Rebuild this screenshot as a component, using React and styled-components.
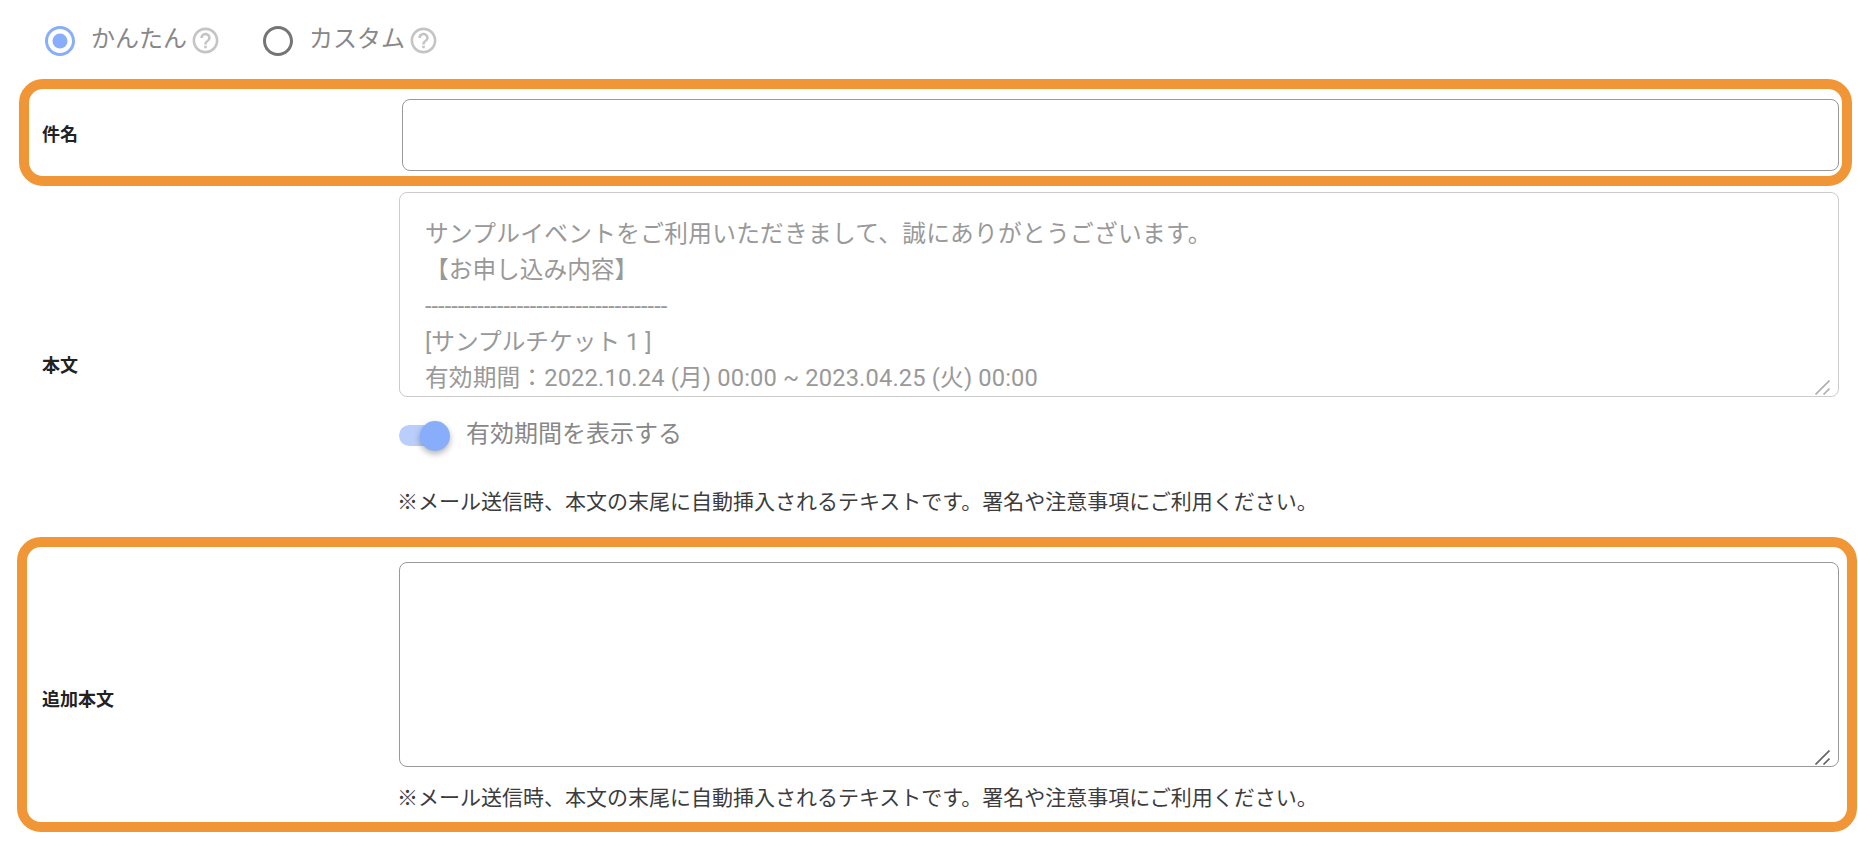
import styled, { createGlobalStyle } from 'styled-components';

const FONT = `Roboto, "Noto Sans CJK JP", sans-serif`;

const HELP_PATH =
  'M11 18h2v-2h-2v2zm1-16C6.48 2 2 6.48 2 12s4.48 10 10 10 10-4.48 10-10S17.52 2 12 2zm0 18c-4.41 0-8-3.59-8-8s3.59-8 8-8 8 3.59 8 8-3.59 8-8 8zm0-14c-2.21 0-4 1.79-4 4h2c0-1.1.9-2 2-2s2 .9 2 2c0 2-3 1.75-3 5h2c0-2.25 3-2.5 3-5 0-2.21-1.79-4-4-4z';
const RING_PATH =
  'M12 2C6.48 2 2 6.48 2 12s4.48 10 10 10 10-4.48 10-10S17.52 2 12 2zm0 18c-4.42 0-8-3.58-8-8s3.58-8 8-8 8 3.58 8 8-3.58 8-8 8z';
const NOTE = '※メール送信時、本文の末尾に自動挿入されるテキストです。署名や注意事項にご利用ください。';

export default function App() {
  return (
    <Page>
      <GlobalStyle />
      <ModeRow>
        <ModeOption>
          <RadioIcon selected />
          <ModeText>かんたん</ModeText>
          <HelpIcon />
        </ModeOption>
        <ModeOption>
          <RadioIcon />
          <ModeText>カスタム</ModeText>
          <HelpIcon />
        </ModeOption>
      </ModeRow>

      <SubjectBox>
        <Label>件名</Label>
        <SubjectInput />
      </SubjectBox>

      <BodyRow>
        <Label $offset={3}>本文</Label>
        <FieldColumn>
          <TextBox $disabled>
            <SpacedLine $spacing={0.3}>サンプルイベントをご利用いただきまして、誠にありがとうございます。</SpacedLine>
            <br />
            【お申し込み内容】
            <br />
            -------------------------------------
            <br />
            [サンプルチケット 1 ]
            <br />
            <SpacedLine $spacing={0.15}>有効期間：2022.10.24 (月) 00:00 ~ 2023.04.25 (火) 00:00</SpacedLine>
            <ResizeHandle color="#b0b0b0" />
          </TextBox>
          <ToggleRow>
            <Toggle>
              <ToggleTrack />
              <ToggleThumb />
            </Toggle>
            <ToggleText>有効期間を表示する</ToggleText>
          </ToggleRow>
          <Note $top={36}>{NOTE}</Note>
        </FieldColumn>
      </BodyRow>

      <ExtraBox>
        <Label $offset={26}>追加本文</Label>
        <FieldColumn>
          <TextBox>
            <ResizeHandle color="#666666" />
          </TextBox>
          <Note $top={16}>{NOTE}</Note>
        </FieldColumn>
      </ExtraBox>
    </Page>
  );
}

function RadioIcon({ selected }) {
  return (
    <RadioSvg viewBox="0 0 24 24" $selected={selected}>
      {selected && <circle cx="12" cy="12" r="5" />}
      <path d={RING_PATH} />
    </RadioSvg>
  );
}

function HelpIcon() {
  return (
    <HelpSvg viewBox="0 0 24 24">
      <path d={HELP_PATH} />
    </HelpSvg>
  );
}

function ResizeHandle({ color }) {
  return (
    <HandleSvg viewBox="0 0 15 15" stroke={color}>
      <path d="M0.5 14.5 L14.5 0.5 M8.5 14.5 L14.5 8.5" />
    </HandleSvg>
  );
}

const GlobalStyle = createGlobalStyle`
  html, body {
    margin: 0;
    background: #ffffff;
  }
`;

const Page = styled.div`
  box-sizing: border-box;
  width: 1858px;
  height: 852px;
  padding-top: 23px;
  overflow: hidden;
  font-family: ${FONT};
  background: #ffffff;
`;

const ModeRow = styled.div`
  display: flex;
  gap: 39px;
  height: 36px;
  margin-left: 42px;
`;

const ModeOption = styled.div`
  display: flex;
  align-items: center;
`;

const RadioSvg = styled.svg`
  width: 36px;
  height: 36px;
  flex-shrink: 0;
  fill: ${({ $selected }) => ($selected ? '#87adfb' : '#757575')};
`;

const ModeText = styled.span`
  margin-left: 13px;
  margin-top: -4px;
  font-size: 24px;
  line-height: 30px;
  color: #888888;
`;

const HelpSvg = styled.svg`
  width: 31px;
  height: 31px;
  margin-left: 3px;
  margin-top: -2px;
  flex-shrink: 0;
  fill: #c4c4c4;
`;

const Highlight = styled.div`
  box-sizing: border-box;
  border: 10px solid #f09637;
  border-radius: 24px;
`;

const SubjectBox = styled(Highlight)`
  display: flex;
  align-items: center;
  width: 1833px;
  height: 107px;
  margin: 20px 0 0 19px;
  padding: 5px 3px 0 13px;
`;

const Label = styled.label`
  width: 357px;
  flex-shrink: 0;
  padding-top: ${({ $offset }) => $offset || 0}px;
  font-size: 18px;
  font-weight: 700;
  line-height: 26px;
  color: #222222;
`;

const SubjectInput = styled.input`
  box-sizing: border-box;
  flex: 1;
  min-width: 0;
  height: 72px;
  margin-left: 3px;
  border: 1px solid #999999;
  border-radius: 8px;
  background: #ffffff;
  outline: none;
`;

const BodyRow = styled.div`
  box-sizing: border-box;
  display: flex;
  align-items: flex-start;
  width: 1839px;
  height: 345px;
  margin-top: 6px;
  padding-left: 42px;

  ${Label} {
    align-self: center;
  }
`;

const FieldColumn = styled.div`
  display: flex;
  flex-direction: column;
  flex: 1;
  min-width: 0;
`;

const TextBox = styled.div`
  position: relative;
  box-sizing: border-box;
  height: 205px;
  padding: 23px 25px 0;
  border: 1px solid ${({ $disabled }) => ($disabled ? '#cccccc' : '#999999')};
  border-radius: 8px;
  overflow: hidden;
  font-size: 23.7px;
  line-height: 36px;
  white-space: nowrap;
  color: #999999;
`;

const SpacedLine = styled.span`
  letter-spacing: ${({ $spacing }) => $spacing}px;
`;

const HandleSvg = styled.svg`
  position: absolute;
  right: 8px;
  bottom: 1px;
  width: 15px;
  height: 15px;
  fill: none;
  stroke-width: 1.7;
`;

const ToggleRow = styled.div`
  display: flex;
  align-items: center;
  height: 30px;
  margin-top: 24px;
`;

const Toggle = styled.div`
  position: relative;
  width: 51px;
  height: 30px;
  flex-shrink: 0;
`;

const ToggleTrack = styled.div`
  position: absolute;
  top: 4px;
  left: 0;
  width: 46px;
  height: 21px;
  border-radius: 11px;
  background: #b9cefb;
`;

const ToggleThumb = styled.div`
  position: absolute;
  top: 0;
  left: 21px;
  width: 30px;
  height: 30px;
  border-radius: 50%;
  background: #87adfb;
  box-shadow: 0 3px 6px rgba(0, 0, 0, 0.3);
`;

const ToggleText = styled.span`
  margin-left: 16px;
  margin-top: -4px;
  font-size: 24px;
  line-height: 30px;
  color: #888888;
`;

const Note = styled.div`
  margin-top: ${({ $top }) => $top}px;
  margin-left: -2px;
  font-size: 21px;
  line-height: 30px;
  white-space: nowrap;
  color: #3c3c3c;
`;

const ExtraBox = styled(Highlight)`
  display: flex;
  align-items: center;
  width: 1840px;
  height: 295px;
  margin-left: 17px;
  padding: 5px 8px 0 15px;
`;
